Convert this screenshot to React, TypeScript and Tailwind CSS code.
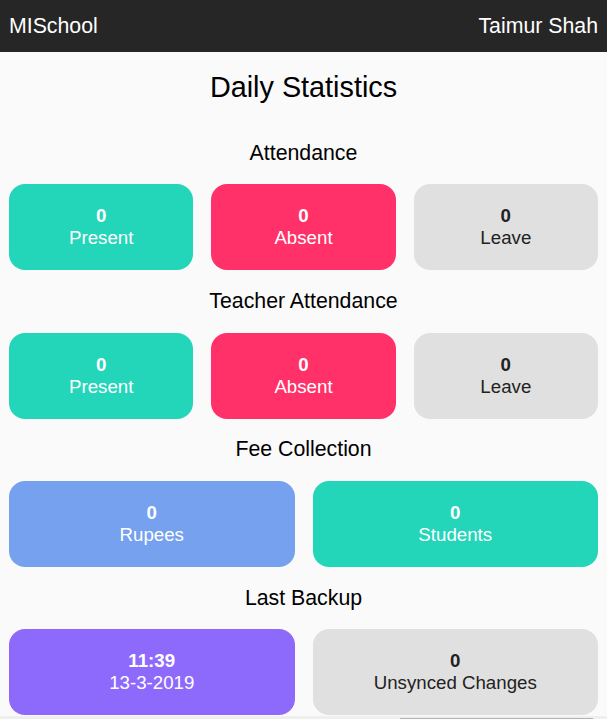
import React from "react";

type Card = { value: string; label: string; tone: "teal" | "pink" | "gray" | "blue" | "purple" };

const toneClass: Record<Card["tone"], string> = {
  teal: "bg-[#23d5b9] text-white",
  pink: "bg-[#ff3168] text-white",
  gray: "bg-[#e0e0e0] text-[#222222]",
  blue: "bg-[#76a1ef] text-white",
  purple: "bg-[#8d6afb] text-white",
};

function StatCard({ value, label, tone }: Card) {
  return (
    <div
      className={`flex-1 h-[86px] rounded-[16px] flex flex-col items-center justify-center ${toneClass[tone]}`}
    >
      <div className="text-[18.7px] leading-[22px] font-bold">{value}</div>
      <div className="text-[18.7px] leading-[22px]">{label}</div>
    </div>
  );
}

function Section({ title, cards }: { title: string; cards: Card[] }) {
  return (
    <div>
      <div className="h-[62.33px] flex items-center justify-center pt-[1px] text-[21.3px] text-black">
        {title}
      </div>
      <div className="flex gap-[18px] px-[9px]">
        {cards.map((c, i) => (
          <StatCard key={i} {...c} />
        ))}
      </div>
    </div>
  );
}

export default function App() {
  return (
    <div
      className="w-[607px] h-[719px] bg-[#fafafa] flex flex-col overflow-hidden"
      style={{ fontFamily: '"Liberation Sans", Arial, sans-serif' }}
    >
      <div className="h-[52px] bg-[#262626] text-white flex items-center justify-between px-[9px] pt-[1px] text-[21.3px] shrink-0">
        <span>MISchool</span>
        <span>Taimur Shah</span>
      </div>
      <div className="h-[70px] flex items-center justify-center pt-[2px] text-[28.8px] text-black shrink-0">
        Daily Statistics
      </div>
      <Section
        title="Attendance"
        cards={[
          { value: "0", label: "Present", tone: "teal" },
          { value: "0", label: "Absent", tone: "pink" },
          { value: "0", label: "Leave", tone: "gray" },
        ]}
      />
      <Section
        title="Teacher Attendance"
        cards={[
          { value: "0", label: "Present", tone: "teal" },
          { value: "0", label: "Absent", tone: "pink" },
          { value: "0", label: "Leave", tone: "gray" },
        ]}
      />
      <Section
        title="Fee Collection"
        cards={[
          { value: "0", label: "Rupees", tone: "blue" },
          { value: "0", label: "Students", tone: "teal" },
        ]}
      />
      <Section
        title="Last Backup"
        cards={[
          { value: "11:39", label: "13-3-2019", tone: "purple" },
          { value: "0", label: "Unsynced Changes", tone: "gray" },
        ]}
      />
      <div className="mt-auto h-[3px] bg-[#efefef] flex justify-end pr-[14px] items-end shrink-0">
        <div className="w-[193px] h-[1px] bg-[#b0b0b0]" />
      </div>
    </div>
  );
}
